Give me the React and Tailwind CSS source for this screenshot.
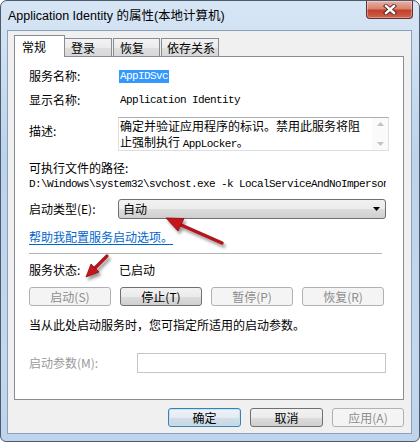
import React from 'react';
import clsx from 'clsx';

const cjk = "font-['Noto_Sans_CJK_SC','Noto_Sans_CJK_JP',sans-serif]";
const mono = "font-['Liberation_Mono','Noto_Sans_CJK_SC',monospace] text-[11px] tracking-[-0.6px]";

// Win7 push button
const Btn = ({ children, disabled, primary, className }) => (
  <div
    className={clsx(
      'flex h-[19px] items-center justify-center rounded-[3px] border text-[12px] leading-none',
      cjk,
      disabled && 'border-[#adb2b5] bg-[#f4f4f4] text-[#8d8d8d]',
      primary && 'border-[#3c7fb1] bg-[linear-gradient(#eef3f8,#e3ebf2_50%,#d3dee8_50%,#c9d6e2)] text-black shadow-[inset_0_0_0_1px_#bfe4f8]',
      !disabled && !primary && 'border-[#707070] bg-[linear-gradient(#f2f2f2,#ebebeb_50%,#dddddd_50%,#cfcfcf)] text-black',
      className
    )}
  >
    {children}
  </div>
);

const Row = ({ label, children, className }) => (
  <div className={clsx('flex h-[16px] items-center', className)}>
    <div className="w-[90px] shrink-0 text-[12px] leading-[16px]">{label}</div>
    {children}
  </div>
);

const Arrows = () => (
  <svg className="pointer-events-none absolute inset-0" width="420" height="442" viewBox="0 0 420 442">
    <defs>
      <filter id="sh" x="-50%" y="-50%" width="200%" height="200%">
        <feDropShadow dx="2" dy="3" stdDeviation="1.6" floodColor="#000" floodOpacity="0.4" />
      </filter>
    </defs>
    <g filter="url(#sh)">
      <line x1="222" y1="243" x2="180" y2="224.5" stroke="#b3121a" strokeWidth="3.5" strokeLinecap="round" />
      <polygon points="166,218 184,218.5 178,231" fill="#c4161d" stroke="#8e0c12" strokeWidth="0.8" strokeLinejoin="round" />
      <line x1="107" y1="256" x2="94" y2="269" stroke="#b3121a" strokeWidth="3.2" strokeLinecap="round" />
      <polygon points="86,277 99,272 91,264" fill="#c4161d" stroke="#8e0c12" strokeWidth="0.8" strokeLinejoin="round" />
    </g>
  </svg>
);

export default function App() {
  return (
    <div className="relative h-[442px] w-[420px] overflow-hidden bg-white">
      <div className="flex h-[442px] w-[420px] flex-col rounded-t-[7px] rounded-b-[6px] border border-[#4b5a6c] bg-[linear-gradient(#d7e6f5,#bcd3ec_35%,#c3d8ee_80%,#bdd4ec)]">
        {/* title bar */}
        <div className="flex h-[29px] shrink-0 items-start justify-between">
          <div className="pl-[7px] pt-[7px] font-['Liberation_Sans','Noto_Sans_CJK_SC',sans-serif] text-[12.5px] leading-[16px] text-black">
            Application Identity 的属性(本地计算机)
          </div>
          <div className="mr-[6px] flex h-[18px] w-[47px] items-center justify-center rounded-b-[4px] border border-t-0 border-[#5c3232] bg-[linear-gradient(#eab1a4,#d98371_45%,#c2402c_55%,#d0624c)] shadow-[inset_0_0_0_1px_rgba(255,255,255,0.35)]">
            <svg width="14" height="11" viewBox="0 0 14 11">
              <path d="M3 2 L11 9 M11 2 L3 9" stroke="#4a2222" strokeWidth="4.2" strokeLinecap="square" />
              <path d="M3 2 L11 9 M11 2 L3 9" stroke="#ffffff" strokeWidth="2.4" strokeLinecap="square" />
            </svg>
          </div>
        </div>

        {/* client area */}
        <div className={clsx('ml-[6px] mr-[7px] mb-[7px] flex flex-1 flex-col border border-[#8ba0b9] bg-[#f0f0f0] pl-[6px] pr-[7px] pt-[4px] pb-[6px] text-black', cjk)}>
          {/* tabs */}
          <div className="flex h-[21px] items-end text-[12px] leading-[16px]">
            <div className="relative z-10 -mb-px flex h-[22px] w-[51px] items-start border border-b-0 border-[#898c95] bg-white pl-[7px] pt-[3px]">
              常规
            </div>
            <div className="-ml-px flex h-[18px] w-[48px] items-center border border-b-0 border-[#898c95] bg-[linear-gradient(#f3f3f3,#ebebeb_50%,#dedede_50%,#d8d8d8)] pl-[6px]">
              登录
            </div>
            <div className="ml-px flex h-[18px] w-[47px] items-center border border-b-0 border-[#898c95] bg-[linear-gradient(#f3f3f3,#ebebeb_50%,#dedede_50%,#d8d8d8)] pl-[6px]">
              恢复
            </div>
            <div className="ml-px flex h-[18px] w-[58px] items-center border border-b-0 border-[#898c95] bg-[linear-gradient(#f3f3f3,#ebebeb_50%,#dedede_50%,#d8d8d8)] pl-[5px]">
              依存关系
            </div>
          </div>

          {/* panel */}
          <div className="flex flex-1 flex-col border border-[#898c95] bg-white pl-[14px] text-[12px] leading-[16px]">
            <Row label="服务名称:" className="mt-[11px]">
              <span className={clsx('bg-[#3399ff] px-px leading-[13px] text-white', mono)}>AppIDSvc</span>
            </Row>
            <Row label="显示名称:" className="mt-[8px]">
              <span className={clsx('pl-px', mono)}>Application Identity</span>
            </Row>

            <div className="mt-[9px] flex">
              <div className="w-[89px] shrink-0 pt-[6px]">描述:</div>
              <div className="flex h-[34px] w-[271px] border border-[#dbdfe6] border-t-[#abadb3]">
                <div className="flex-1 pl-[1px] text-[12px] leading-[16px]">
                  <div>确定并验证应用程序的标识。禁用此服务将阻</div>
                  <div>止强制执行 <span className={mono}>AppLocker</span>。</div>
                </div>
                <div className="flex w-[16px] flex-col items-center justify-between bg-[#fafafa] py-[4px]">
                  <svg width="7" height="4" viewBox="0 0 7 4"><path d="M0 4 L3.5 0 L7 4 Z" fill="#c2c2c2" /></svg>
                  <svg width="7" height="4" viewBox="0 0 7 4"><path d="M0 0 L7 0 L3.5 4 Z" fill="#c2c2c2" /></svg>
                </div>
              </div>
            </div>

            <div className="mt-[9px] h-[16px]">可执行文件的路径:</div>
            <div className={clsx('h-[16px] w-[357px] overflow-hidden whitespace-nowrap leading-[16px]', mono)}>
              D:\Windows\system32\svchost.exe -k LocalServiceAndNoImpersonation
            </div>

            <div className="mt-[7px] flex items-center">
              <div className="w-[89px] shrink-0">启动类型(E):</div>
              <div className="flex h-[20px] w-[268px] items-center justify-between rounded-[3px] border border-[#707070] bg-[linear-gradient(#f2f2f2,#ebebeb_50%,#dddddd_50%,#cfcfcf)] pl-[4px] pr-[5px]">
                <span>自动</span>
                <svg width="7" height="4" viewBox="0 0 7 4"><path d="M0 0 L7 0 L3.5 4 Z" fill="#000" /></svg>
              </div>
            </div>

            <div className="mt-[10px] h-[16px]">
              <span className="text-[#0066cc] underline underline-offset-2">帮助我配置服务启动选项。</span>
            </div>

            <div className="mt-[8px] h-px w-[353px] bg-[#b4b4b4]" />

            <Row label="服务状态:" className="mt-[8px]">
              <span>已启动</span>
            </Row>

            <div className="mt-[9px] flex gap-[9px]">
              <Btn disabled className="w-[82px]">启动(S)</Btn>
              <Btn className="w-[82px]">停止(T)</Btn>
              <Btn disabled className="w-[82px]">暂停(P)</Btn>
              <Btn disabled className="w-[82px]">恢复(R)</Btn>
            </div>

            <div className="mt-[11px] h-[16px]">当从此处启动服务时，您可指定所适用的启动参数。</div>

            <div className="mt-[20px] flex items-center">
              <div className="w-[108px] shrink-0 text-[#9a9a9a]">启动参数(M):</div>
              <div className="h-[20px] w-[249px] border border-[#c2c5ca] bg-white" />
            </div>
          </div>

          {/* dialog buttons */}
          <div className="mt-[8px] flex justify-end gap-[9px]">
            <Btn primary className="w-[73px]">确定</Btn>
            <Btn className="w-[73px]">取消</Btn>
            <Btn disabled className="w-[72px]">应用(A)</Btn>
          </div>
        </div>
      </div>
      <Arrows />
    </div>
  );
}
